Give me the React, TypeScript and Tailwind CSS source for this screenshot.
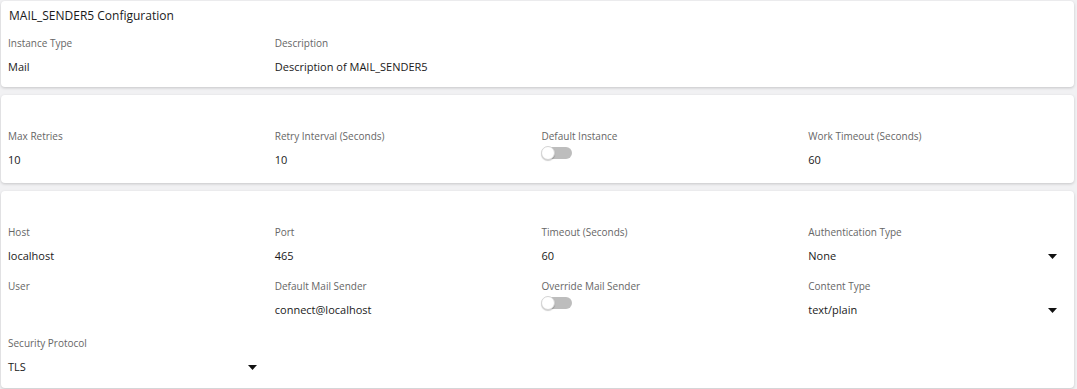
const Label = ({ children }: { children: React.ReactNode }) => (
  <div className="text-[10px] leading-4 text-[#666]">{children}</div>
);

const Value = ({ children }: { children?: React.ReactNode }) => (
  <div className="mt-2 h-4 text-[11px] leading-4 text-[#1a1a1a]">{children}</div>
);

const Field = ({ label, value }: { label: string; value?: string }) => (
  <div className="pl-[4px] pr-[14px]">
    <Label>{label}</Label>
    <Value>{value}</Value>
  </div>
);

const Caret = () => (
  <svg width="9" height="5" viewBox="0 0 9 5" className="shrink-0">
    <path d="M0 0 L9 0 L4.5 5 Z" fill="#111" />
  </svg>
);

const Select = ({ label, value }: { label: string; value: string }) => (
  <div className="pl-[4px] pr-[14px]">
    <Label>{label}</Label>
    <div className="mt-2 flex h-4 items-center justify-between text-[11px] leading-4 text-[#1a1a1a]">
      <span>{value}</span>
      <Caret />
    </div>
  </div>
);

const Toggle = ({ label }: { label: string }) => (
  <div className="pl-[4px] pr-[14px]">
    <Label>{label}</Label>
    <div className="relative mt-[3px] h-[12px] w-[30px] rounded-full bg-[#bdbdbd]">
      <div className="absolute left-[-1px] top-[-1px] h-[14px] w-[14px] rounded-full border border-[#d4d4d4] bg-white shadow-[0_1px_1px_rgba(0,0,0,0.2)]" />
    </div>
  </div>
);

const Card = ({ className, children }: { className: string; children: React.ReactNode }) => (
  <div className={`rounded-[4px] bg-white px-[3px] shadow-[0_1px_3px_rgba(0,0,0,0.18)] ${className}`}>{children}</div>
);

export default function App() {
  return (
    <div
      className="flex min-h-[389px] w-full flex-col gap-2 bg-[#f1f1f3] pl-[1px] pr-[3px] pt-[1px]"
      style={{ fontFamily: '"Open Sans", sans-serif' }}
    >
      <Card className="pt-[6px] pb-[12px]">
        <div className="pl-[5px] text-[12px] leading-[18px] text-[#1a1a1a]">MAIL_SENDER5 Configuration</div>
        <div className="mt-[10px] grid grid-cols-4">
          <Field label="Instance Type" value="Mail" />
          <Field label="Description" value="Description of MAIL_SENDER5" />
        </div>
      </Card>

      <Card className="pt-[33px] pb-[15px]">
        <div className="grid grid-cols-4">
          <Field label="Max Retries" value="10" />
          <Field label="Retry Interval (Seconds)" value="10" />
          <Toggle label="Default Instance" />
          <Field label="Work Timeout (Seconds)" value="60" />
        </div>
      </Card>

      <Card className="pt-[33px] pb-[13px]">
        <div className="grid grid-cols-4 gap-y-[14px]">
          <Field label="Host" value="localhost" />
          <Field label="Port" value="465" />
          <Field label="Timeout (Seconds)" value="60" />
          <Select label="Authentication Type" value="None" />
          <Field label="User" />
          <Field label="Default Mail Sender" value="connect@localhost" />
          <Toggle label="Override Mail Sender" />
          <Select label="Content Type" value="text/plain" />
        </div>
        <div className="mt-[17px] grid grid-cols-4">
          <Select label="Security Protocol" value="TLS" />
        </div>
      </Card>
    </div>
  );
}
